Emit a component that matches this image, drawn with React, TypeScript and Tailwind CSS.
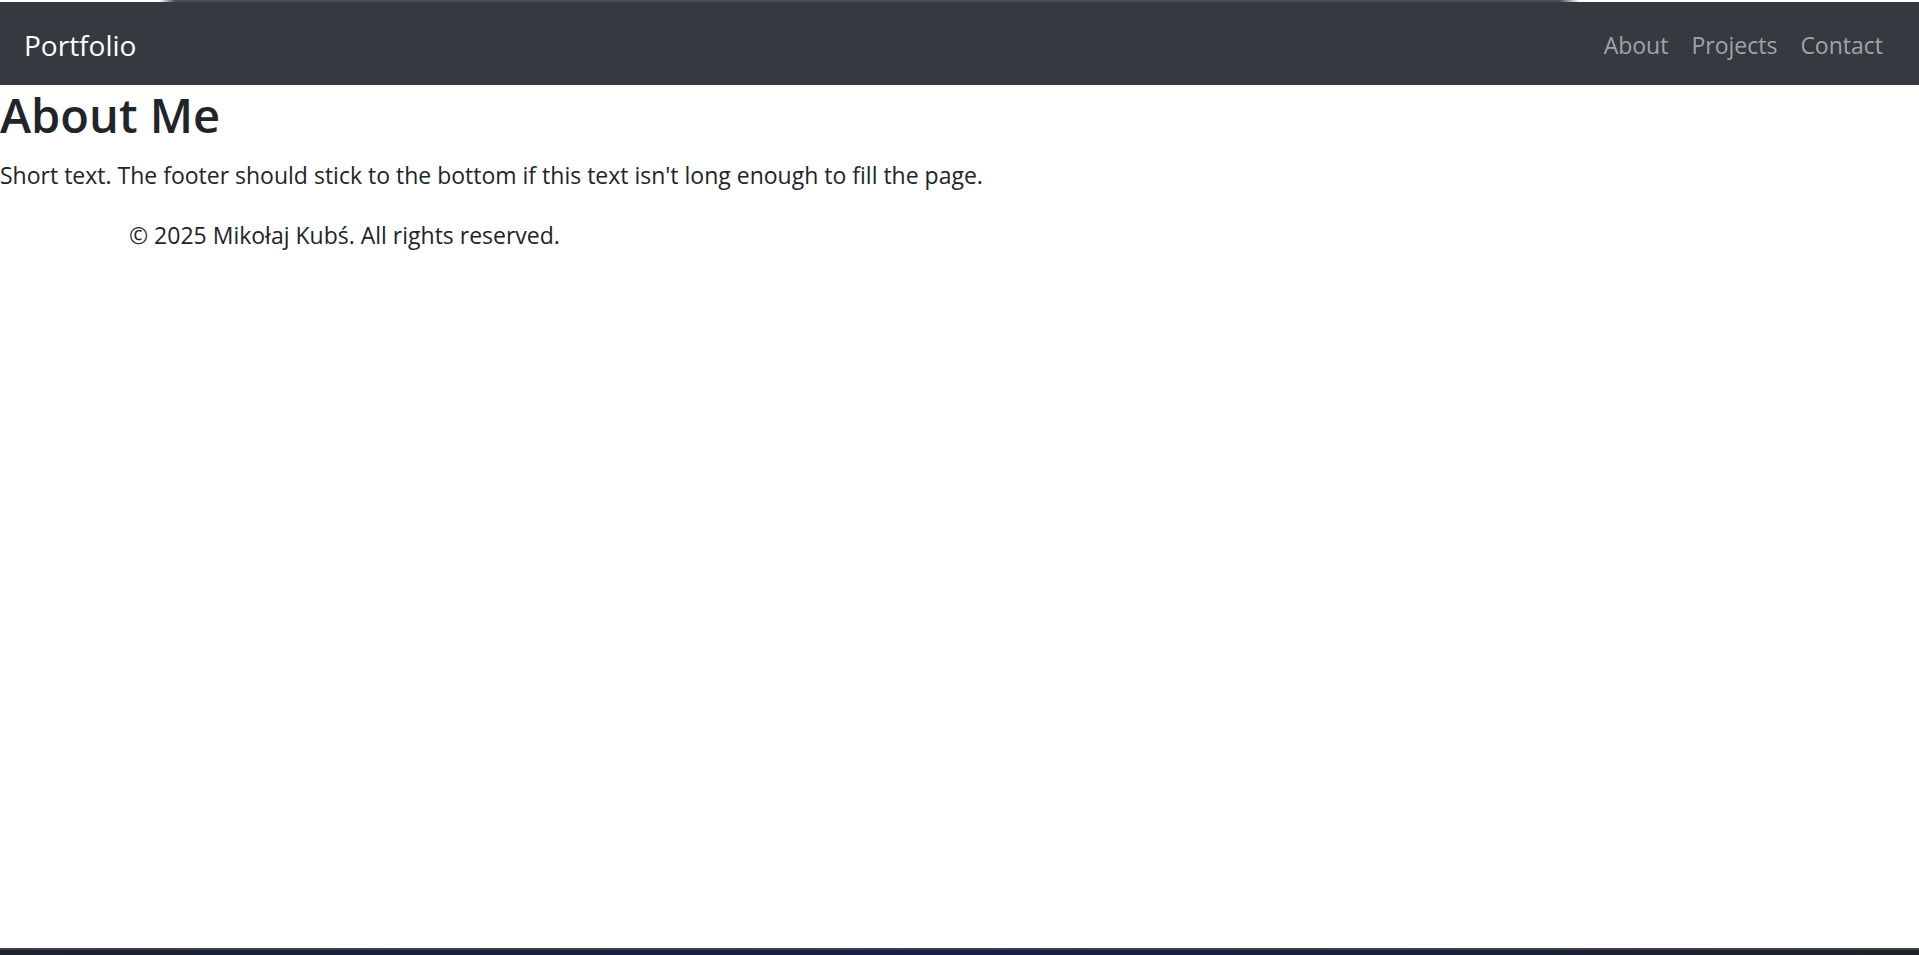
import React from 'react';

const links = ['About', 'Projects', 'Contact'];

export default function App() {
  return (
    <div className="min-h-screen flex flex-col bg-white text-[#212529] font-['Open_Sans',sans-serif]">
      {/* window chrome line */}
      <div className="flex h-[2px]">
        <div className="w-[160px] bg-white" />
        <div className="w-[15px] bg-gradient-to-r from-white to-[#4a4d52]" />
        <div className="flex-1 bg-[#4a4d52]" />
        <div className="w-[20px] bg-gradient-to-r from-[#4a4d52] to-white" />
        <div className="w-[340px] bg-white" />
      </div>

      <nav className="h-[83px] bg-[#343a40] flex items-center justify-between pl-[24px] pr-[36px]">
        <a href="#" className="text-white text-[28px] leading-none mt-[2px]">
          Portfolio
        </a>
        <ul className="flex items-center gap-[23px] mt-[6px]">
          {links.map((l) => (
            <li key={l}>
              <a href="#" className="text-[#a1a4a7] text-[23px] leading-none">
                {l}
              </a>
            </li>
          ))}
        </ul>
      </nav>

      <main>
        <h1 className="text-[47px] font-semibold leading-[60px] mb-[12px]">About Me</h1>
        <p className="text-[23px] leading-[36px] mb-[24px]">
          Short text. The footer should stick to the bottom if this text isn't long enough to fill the page.
        </p>
      </main>

      <footer className="pl-[129px]">
        <p className="text-[23px] leading-[36px]">© 2025 Mikołaj Kubś. All rights reserved.</p>
      </footer>

      <div className="flex-1" />

      <div className="h-[2px] bg-[#3c3f44]" />
      <div className="h-[5px] bg-gradient-to-r from-[#1c2230] via-[#14204a] to-[#1e2229]" />
    </div>
  );
}
